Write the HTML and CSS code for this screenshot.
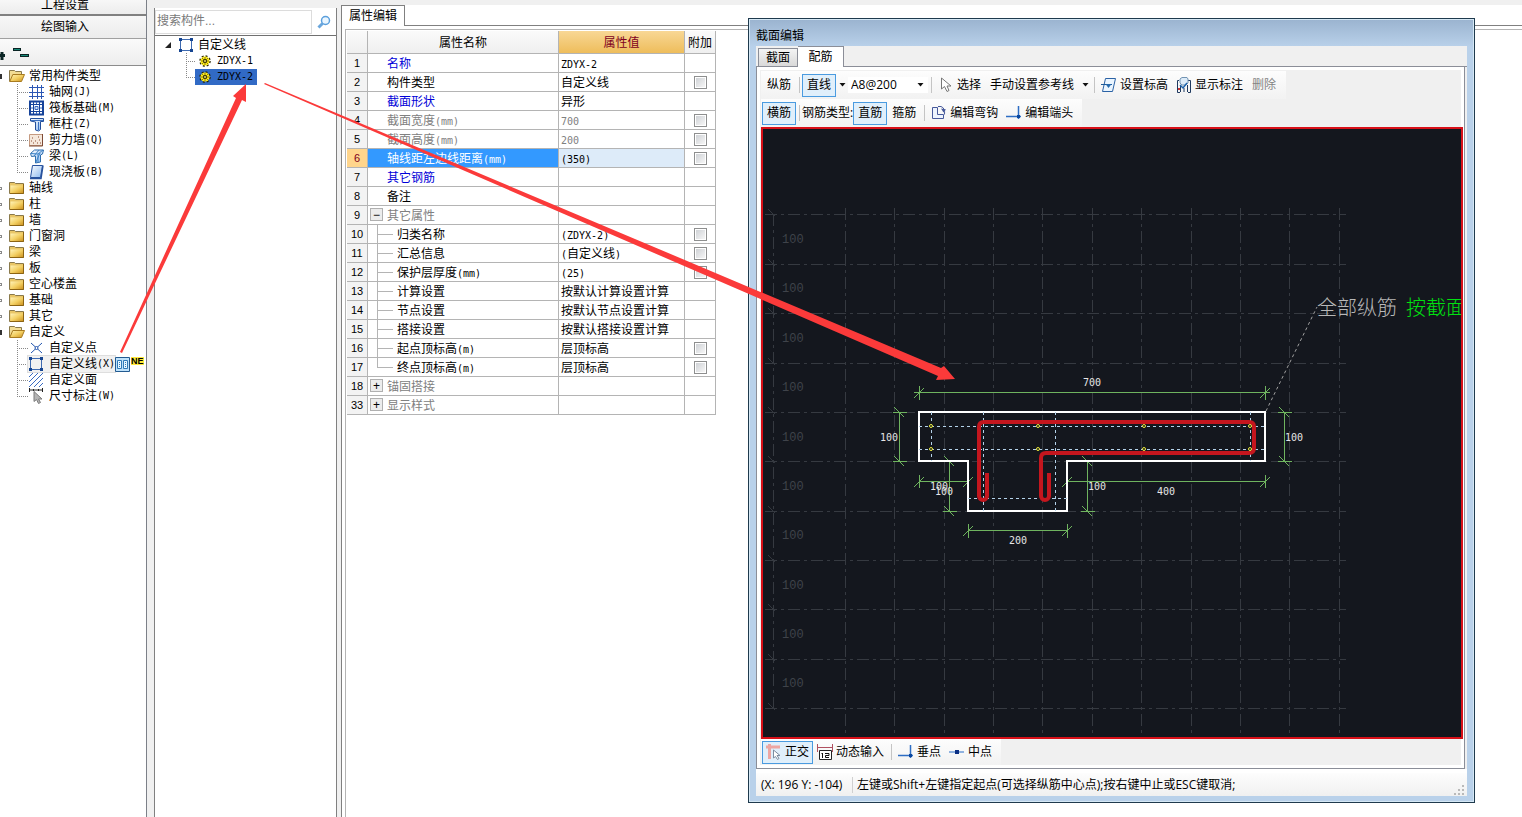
FILE: index.html
```html
<!DOCTYPE html>
<html lang="zh-CN">
<head>
    <meta charset="UTF-8">
    <meta name="viewport" content="width=device-width, initial-scale=1.0">
    <title>属性编辑</title>
    <link rel="stylesheet" href="styles.css">
</head>
<body>

    <!-- Icons -->
    <svg class="sprite" aria-hidden="true">
        <defs>
            <linearGradient id="gold" x1="0" y1="0" x2="1" y2="1">
                <stop offset="0" stop-color="#fff3b8"/>
                <stop offset=".5" stop-color="#f3cf62"/>
                <stop offset="1" stop-color="#c98e1c"/>
            </linearGradient>
            <linearGradient id="sky" x1="0" y1="0" x2="1" y2="1">
                <stop offset="0" stop-color="#ffffff"/>
                <stop offset="1" stop-color="#8ab8ee"/>
            </linearGradient>
        </defs>
        <symbol id="i-folder" viewBox="0 0 16 16">
            <path d="M.5 13.500v-11h5l1 1h8v10z" fill="#e9c667" stroke="#8a7a4c"/>
            <path d="M1.500 5.500h13v8h-13z" fill="url(#gold)"/>
            <path d="M14.500 4v9.500H1" fill="none" stroke="#8c6413"/>
        </symbol>
        <symbol id="i-open" viewBox="0 0 16 16">
            <path d="M.5 13.500v-11h5l1 1h6v3" fill="#f2dc93" stroke="#8a7a4c"/>
            <path d="M.800 13.500l3-7h11.700l-3 7z" fill="url(#gold)" stroke="#a87b20"/>
        </symbol>
        <symbol id="i-grid" viewBox="0 0 16 16">
            <path d="M0 3.500h15M0 8.500h15M0 12.500h15M3.500 1v14M8.500 1v14M12.500 1v14" stroke="#2b57b5" fill="none"/>
        </symbol>
        <symbol id="i-raft" viewBox="0 0 16 16">
            <path d="M1 1.500h13v13H1z" fill="#fff" stroke="#16439a" stroke-width="2"/>
            <path d="M4.500 2v12M10.500 2v12M1 4.500h13M1 11.500h13" stroke="#16439a" fill="none"/>
            <path d="M2 8h2M11 8h2M7.500 2v2M7.500 12v2M6 6.500h3v3H6z" stroke="#3a69bd" fill="#cfe2fa"/>
        </symbol>
        <symbol id="i-column" viewBox="0 0 16 16">
            <path d="M1.500 2.500h13v3h-3v8l-2 1.500-3-1V6l-5-1z" fill="url(#sky)" stroke="#234f9c"/>
            <path d="M2 4.500h12M9.500 6v8" stroke="#3a6fc0" fill="none"/>
        </symbol>
        <symbol id="i-shear" viewBox="0 0 16 16">
            <path d="M.5 2.500h13v11H.5z" fill="#f5e8dc" stroke="#c59a80"/>
            <path d="M13.500 2v12H0" stroke="#7d4a35" fill="none"/>
            <path d="M3 6h1M6 9h1M9 5h1M4 11h1M8 11h1M10 8h1M11 11h1M2 9h1" stroke="#8b4b30"/>
        </symbol>
        <symbol id="i-beam" viewBox="0 0 16 16">
            <path d="M1.500 5.500l4-3.500h9l-1 4-2 1v7l-5 1V8l-4 .5z" fill="url(#sky)" stroke="#2e6dad"/>
            <path d="M2 5.500l7 .5 5-4M7 14l4-9M9 6v8M5 8l5-6" stroke="#3c83c7" fill="none"/>
        </symbol>
        <symbol id="i-slab" viewBox="0 0 16 16">
            <path d="M3.500 1.500h10l-2 12h-10z" fill="url(#sky)" stroke="#27519d"/>
            <path d="M1 14.500h11l2-13" fill="none" stroke="#27519d" stroke-width="1.500"/>
        </symbol>
        <symbol id="i-point" viewBox="0 0 16 16">
            <path d="M2 3l11 10M13 3L2 13" stroke="#2456ae" fill="none"/>
            <circle cx="7.500" cy="8" r="1.500" fill="#fff" stroke="#2456ae"/>
        </symbol>
        <symbol id="i-line" viewBox="0 0 16 16">
            <path d="M1.500 2.500h11v11h-11z" fill="none" stroke="#3e6ab0"/>
            <path d="M0 1h3v3H0zM11 1h3v3h-3zM0 12h3v3H0zM11 12h3v3h-3z" fill="#164591"/>
        </symbol>
        <symbol id="i-area" viewBox="0 0 16 16">
            <path d="M0 5l4-4M0 10l9-9M0 15L14 1M5 15l9-9M10 15l4-4" stroke="#3a6bc2" fill="none"/>
        </symbol>
        <symbol id="i-dim" viewBox="0 0 16 16">
            <path d="M.5 0v4M13.500 0v4M1 2h12M4.500 1v2M9.500 1v2" stroke="#222" fill="none"/>
            <path d="M5 3.500v10l2.500-2 2 4 2-1-2-3.500h3.500z" fill="#b5b5b5" stroke="#7c7c7c"/>
        </symbol>
        <symbol id="i-gear" viewBox="0 0 16 16">
            <circle cx="8" cy="8" r="5" fill="none" stroke="#2b2600" stroke-width="1.500" stroke-dasharray="2 1.920"/>
            <circle cx="8" cy="8" r="4.500" fill="#ffec1a"/>
            <path d="M8 4v8M4 8h8M5 5l6 6M11 5l-6 6" stroke="#5c5400" stroke-width=".7" fill="none"/>
            <circle cx="8" cy="8" r="1.500" fill="#fff36a" stroke="#2b2600"/>
        </symbol>
        <symbol id="i-cursor" viewBox="0 0 16 16">
            <path d="M3.500 1v11l3-2.500 2.500 5 2-1L9 9h4z" fill="#fff" stroke="#777"/>
        </symbol>
        <symbol id="i-level" viewBox="0 0 16 16">
            <path d="M4.500 1.500h10l-3 13h-10z" fill="#eaf5ff" stroke="#2b62a5"/>
            <path d="M0 7.500h11" stroke="#1d5a99"/>
            <path d="M4.500 7h6l-3 4z" fill="#2469ad"/>
        </symbol>
        <symbol id="i-label" viewBox="0 0 16 16">
            <path d="M3 3.500H1.500v12H4M12 3.500h2.500v12H12M4.500 9v6M11.500 8v7M8 11v4" fill="none" stroke="#1f3a60"/>
            <path d="M4 2l2-1.500h5l1 1.500v4l-3 2H6L4 6z" fill="#dcebf8" stroke="#7293b2"/>
            <path d="M4 8l3 3 4-5" fill="none" stroke="#1b62ab" stroke-width="1.500"/>
            <path d="M2 11h2v2H2z" fill="#c33"/>
        </symbol>
        <symbol id="i-hook" viewBox="0 0 16 16">
            <path d="M1.500 2.500h5v7h6v4h-11z" fill="#edf3fd" stroke="#46599b"/>
            <path d="M7 1.500h3c3 1 4 4 3.500 8" fill="none" stroke="#46599b"/>
            <path d="M10 3.500l5 1-2.500 3z" fill="#46599b"/>
        </symbol>
        <symbol id="i-end" viewBox="0 0 16 16">
            <path d="M0 11.500h15M12.500 1v13" fill="none" stroke="#2d6dc4" stroke-width="1.500"/>
            <path d="M11 10h3v3h-3z" fill="#0c479c"/>
        </symbol>
        <symbol id="i-ortho" viewBox="0 0 16 16">
            <path d="M0 3h14M3.500 0v15" stroke="#eda6a2" stroke-width="3"/>
            <path d="M7.500 6v8l2-1.500 2 3 1.500-1-2-3h3z" fill="#fff" stroke="#7d8da0"/>
        </symbol>
        <symbol id="i-input" viewBox="0 0 16 16">
            <path d="M.5 0v8M15.500 0v8M1 3.500h14" stroke="#b05060" fill="none"/>
            <path d="M2.500 6.500h12v9h-12z" fill="#fff" stroke="#222"/>
            <path d="M5.500 9v5M4.500 9.500h1M8 9.500h4v2H8.500v2H12" stroke="#111" fill="none"/>
        </symbol>
        <symbol id="i-mid" viewBox="0 0 16 16">
            <path d="M0 8h15" stroke="#6d9bd8" stroke-width="1.500"/>
            <path d="M6 6h4v4H6z" fill="#0b2f83"/>
        </symbol>
        <symbol id="i-down" viewBox="0 0 7 4">
            <path d="M.5 0h6l-3 3.500z" fill="#111"/>
        </symbol>
    </svg>

    <!-- Module bar -->
    <div class="nav">
        <button class="nav-btn first">工程设置</button>
        <button class="nav-btn">绘图输入</button>
        <div class="nav-tools">
            <svg width="32" height="20" viewBox="0 0 32 20">
                <path d="M-2 12.500h7M2 9v8M13 6.500h8M20 12.500h9" fill="none" stroke="#0a2424" stroke-width="3"/>
                <path d="M14 6.500h6M21 12.500h7" stroke="#178a78"/>
            </svg>
        </div>
        <ul class="tree">
            <li class="root open"><svg class="icon"><use href="#i-open"/></svg>常用构件类型</li>
            <li class="leaf"><svg class="icon"><use href="#i-grid"/></svg>轴网<span class="en">(J)</span></li>
            <li class="leaf"><svg class="icon"><use href="#i-raft"/></svg>筏板基础<span class="en">(M)</span></li>
            <li class="leaf"><svg class="icon"><use href="#i-column"/></svg>框柱<span class="en">(Z)</span></li>
            <li class="leaf"><svg class="icon"><use href="#i-shear"/></svg>剪力墙<span class="en">(Q)</span></li>
            <li class="leaf"><svg class="icon"><use href="#i-beam"/></svg>梁<span class="en">(L)</span></li>
            <li class="leaf last"><svg class="icon"><use href="#i-slab"/></svg>现浇板<span class="en">(B)</span></li>
            <li class="root"><svg class="icon"><use href="#i-folder"/></svg>轴线</li>
            <li class="root"><svg class="icon"><use href="#i-folder"/></svg>柱</li>
            <li class="root"><svg class="icon"><use href="#i-folder"/></svg>墙</li>
            <li class="root"><svg class="icon"><use href="#i-folder"/></svg>门窗洞</li>
            <li class="root"><svg class="icon"><use href="#i-folder"/></svg>梁</li>
            <li class="root"><svg class="icon"><use href="#i-folder"/></svg>板</li>
            <li class="root"><svg class="icon"><use href="#i-folder"/></svg>空心楼盖</li>
            <li class="root"><svg class="icon"><use href="#i-folder"/></svg>基础</li>
            <li class="root"><svg class="icon"><use href="#i-folder"/></svg>其它</li>
            <li class="root open"><svg class="icon"><use href="#i-open"/></svg>自定义</li>
            <li class="leaf"><svg class="icon"><use href="#i-point"/></svg>自定义点</li>
            <li class="leaf">
                <span class="current"><svg class="icon"><use href="#i-line"/></svg>自定义线<span class="en">(X)</span></span>
                <svg class="book" viewBox="0 0 15 15">
                    <path d="M.5.5h14v14H.5z" fill="#bfe2fb" stroke="#235b91"/>
                    <path d="M2.500 3.500h4v8h-4zM8.500 3.500h4v8h-4z" fill="#e6f6ff" stroke="#2f7ab8"/>
                    <path d="M4.500 5v6M10.500 5v6" stroke="#2f7ab8" stroke-dasharray="1 1"/>
                </svg>
                <span class="new">NE</span>
            </li>
            <li class="leaf"><svg class="icon"><use href="#i-area"/></svg>自定义面</li>
            <li class="leaf last"><svg class="icon"><use href="#i-dim"/></svg>尺寸标注<span class="en">(W)</span></li>
        </ul>
    </div>

    <!-- Component list -->
    <div class="parts">
        <div class="search">
            <input type="text" placeholder="搜索构件..." aria-label="搜索构件">
            <button aria-label="搜索">
                <svg width="14" height="14" viewBox="0 0 14 14">
                    <path d="M1.500 12.500l4-4" stroke="#6aa6dc" stroke-width="3"/>
                    <circle cx="8.500" cy="5.500" r="4" fill="#eaf6ff" stroke="#5b9fdc" stroke-width="1.500"/>
                </svg>
            </button>
        </div>
        <ul class="tree parts-tree">
            <li class="top"><svg class="tri" viewBox="0 0 6 6"><path d="M6 0v6H0z" fill="#222"/></svg><svg class="icon"><use href="#i-line"/></svg>自定义线</li>
            <li class="leaf"><span class="part"><svg class="icon"><use href="#i-gear"/></svg><span class="en">ZDYX-1</span></span></li>
            <li class="leaf last"><span class="part selected"><svg class="icon"><use href="#i-gear"/></svg><span class="en">ZDYX-2</span></span></li>
        </ul>
    </div>

    <!-- Property editor -->
    <div class="props">
        <div class="props-tabs"><button class="props-tab">属性编辑</button></div>
        <div class="props-body">
            <table class="grid">
                <colgroup><col class="c-no"><col class="c-name"><col class="c-value"><col class="c-add"></colgroup>
                <thead>
                    <tr><th></th><th>属性名称</th><th class="hot">属性值</th><th>附加</th></tr>
                </thead>
                <tbody>
                    <tr><th>1</th><td class="name blue">名称</td><td><span class="en">ZDYX-2</span></td><td></td></tr>
                    <tr><th>2</th><td class="name">构件类型</td><td>自定义线</td><td class="add"><input type="checkbox" aria-label="构件类型"></td></tr>
                    <tr><th>3</th><td class="name blue">截面形状</td><td>异形</td><td></td></tr>
                    <tr class="dim"><th>4</th><td class="name">截面宽度<span class="en">(mm)</span></td><td><span class="en">700</span></td><td class="add"><input type="checkbox" aria-label="截面宽度"></td></tr>
                    <tr class="dim"><th>5</th><td class="name">截面高度<span class="en">(mm)</span></td><td><span class="en">200</span></td><td class="add"><input type="checkbox" aria-label="截面高度"></td></tr>
                    <tr class="active"><th>6</th><td class="name">轴线距左边线距离<span class="en">(mm)</span></td><td><span class="en">(350)</span></td><td class="add"><input type="checkbox" aria-label="轴线距左边线距离"></td></tr>
                    <tr><th>7</th><td class="name blue">其它钢筋</td><td></td><td></td></tr>
                    <tr><th>8</th><td class="name">备注</td><td></td><td></td></tr>
                    <tr class="dim"><th>9</th><td class="group"><button class="fold" aria-label="折叠">−</button>其它属性</td><td></td><td></td></tr>
                    <tr><th>10</th><td class="sub">归类名称</td><td><span class="en">(ZDYX-2)</span></td><td class="add"><input type="checkbox" aria-label="归类名称"></td></tr>
                    <tr><th>11</th><td class="sub">汇总信息</td><td><span class="en">(</span>自定义线<span class="en">)</span></td><td class="add"><input type="checkbox" aria-label="汇总信息"></td></tr>
                    <tr><th>12</th><td class="sub">保护层厚度<span class="en">(mm)</span></td><td><span class="en">(25)</span></td><td class="add"><input type="checkbox" aria-label="保护层厚度"></td></tr>
                    <tr><th>13</th><td class="sub">计算设置</td><td>按默认计算设置计算</td><td></td></tr>
                    <tr><th>14</th><td class="sub">节点设置</td><td>按默认节点设置计算</td><td></td></tr>
                    <tr><th>15</th><td class="sub">搭接设置</td><td>按默认搭接设置计算</td><td></td></tr>
                    <tr><th>16</th><td class="sub">起点顶标高<span class="en">(m)</span></td><td>层顶标高</td><td class="add"><input type="checkbox" aria-label="起点顶标高"></td></tr>
                    <tr><th>17</th><td class="sub end">终点顶标高<span class="en">(m)</span></td><td>层顶标高</td><td class="add"><input type="checkbox" aria-label="终点顶标高"></td></tr>
                    <tr class="dim"><th>18</th><td class="group"><button class="fold" aria-label="展开">+</button>锚固搭接</td><td></td><td></td></tr>
                    <tr class="dim"><th>33</th><td class="group"><button class="fold" aria-label="展开">+</button>显示样式</td><td></td><td></td></tr>
                </tbody>
            </table>
        </div>
    </div>

    <!-- Section editor window -->
    <div class="window">
        <div class="title">截面编辑</div>
        <div class="client">
            <div class="tabs">
                <button class="tab">截面</button>
                <button class="tab on">配筋</button>
            </div>
            <div class="pane">
                <div class="bar">
                    <button class="tool">纵筋</button>
                    <i class="sep"></i>
                    <button class="tool on">直线</button>
                    <button class="drop" aria-label="直线选项"><svg><use href="#i-down"/></svg></button>
                    <div class="combo">
                        <select aria-label="钢筋信息"><option>A8@200</option></select>
                        <svg class="down"><use href="#i-down"/></svg>
                    </div>
                    <i class="sep"></i>
                    <button class="tool pic"><svg class="icon"><use href="#i-cursor"/></svg>选择</button>
                    <button class="tool">手动设置参考线</button>
                    <button class="drop" aria-label="参考线选项"><svg><use href="#i-down"/></svg></button>
                    <i class="sep"></i>
                    <button class="tool pic"><svg class="icon"><use href="#i-level"/></svg>设置标高</button>
                    <button class="tool pic"><svg class="icon"><use href="#i-label"/></svg>显示标注</button>
                    <button class="tool" disabled>删除</button>
                </div>
                <div class="bar">
                    <button class="tool on">横筋</button>
                    <i class="sep"></i>
                    <span class="caption">钢筋类型:</span>
                    <button class="tool on">直筋</button>
                    <button class="tool">箍筋</button>
                    <i class="sep"></i>
                    <button class="tool pic"><svg class="icon"><use href="#i-hook"/></svg>编辑弯钩</button>
                    <button class="tool pic"><svg class="icon"><use href="#i-end"/></svg>编辑端头</button>
                </div>

                <svg class="canvas" viewBox="763 129 698 608">
                    <!-- axis grid -->
                    <g class="axis">
                        <path d="M845.500 208V737M894.500 208V737M944.500 208V737M993.500 208V737M1042.500 208V737M1092.500 208V737M1141.500 208V737M1191.500 208V737M1240.500 208V737M1289.500 208V737M1339.500 208V737"/>
                        <path d="M765 214.500H1346M765 264.500H1346M765 313.500H1346M765 363.500H1346M765 412.500H1346M765 461.500H1346M765 511.500H1346M765 560.500H1346M765 609.500H1346M765 659.500H1346M765 708.500H1346"/>
                        <path d="M773.500 214V708"/>
                    </g>
                    <path class="axis-tick" d="M768 209l7 7M768 259l7 7M768 308l7 7M768 358l7 7M768 407l7 7M768 456l7 7M768 506l7 7M768 555l7 7M768 604l7 7M768 654l7 7M768 703l7 7"/>
                    <g class="axis-text">
                        <text x="782" y="243">100</text>
                        <text x="782" y="292">100</text>
                        <text x="782" y="342">100</text>
                        <text x="782" y="391">100</text>
                        <text x="782" y="441">100</text>
                        <text x="782" y="490">100</text>
                        <text x="782" y="539">100</text>
                        <text x="782" y="589">100</text>
                        <text x="782" y="638">100</text>
                        <text x="782" y="687">100</text>
                    </g>

                    <!-- dimensions -->
                    <g class="dims">
                        <path d="M914 392.500H1270M919.500 386v14M914 398l10-10M1265.500 386v14M1260 398l10-10"/>
                        <path d="M899.500 412V462M893 412.500h14M894 407l10 10M893 461.500h14M894 456l10 10"/>
                        <path d="M1284.500 412V462M1278 412.500h14M1279 407l10 10M1278 461.500h14M1279 456l10 10"/>
                        <path d="M949.500 461V511M943 461.500h14M944 456l10 10M943 511.500h14M944 506l10 10"/>
                        <path d="M1087.500 461V511M1081 461.500h14M1082 456l10 10M1081 511.500h14M1082 506l10 10"/>
                        <path d="M919 481.500H968M919.500 475v13M914 487l10-10M968.500 475v13M963 487l10-10"/>
                        <path d="M1067 481.500H1265M1067.500 475v13M1062 487l10-10M1265.500 475v13M1260 487l10-10"/>
                        <path d="M968 530.500H1067M968.500 524v14M963 536l10-10M1067.500 524v14M1062 536l10-10"/>
                    </g>

                    <!-- section outline -->
                    <path class="outline" d="M919 412H1265V461H1067V511H968V461H919z"/>

                    <!-- stirrup -->
                    <path class="cover" d="M919 426.500H1265M919 449.500H1265M968 498.500H1067M931.500 412V461M983.500 412V511M1055.500 412V511M1250.500 412V461"/>
                    <path class="rebar" d="M987 475V496a4 4 0 0 1-8 0V427q0-5 5-5H1249q5 0 5 5V448q0 5-5 5H1046q-5 0-5 5V496a4 4 0 0 0 8 0V475"/>
                    <g class="bars">
                        <circle cx="931" cy="426" r="1.500"/><circle cx="1038" cy="426" r="1.500"/><circle cx="1144" cy="426" r="1.500"/><circle cx="1250" cy="426" r="1.500"/>
                        <circle cx="931" cy="449" r="1.500"/><circle cx="1038" cy="449" r="1.500"/><circle cx="1144" cy="449" r="1.500"/><circle cx="1250" cy="449" r="1.500"/>
                    </g>
                    <g class="dim-text">
                        <text x="1092" y="386">700</text>
                        <text x="889" y="441">100</text>
                        <text x="1294" y="441">100</text>
                        <text x="939" y="490">100</text>
                        <text x="944" y="495">100</text>
                        <text x="1097" y="490">100</text>
                        <text x="1166" y="495">400</text>
                        <text x="1018" y="544">200</text>
                    </g>

                    <!-- note -->
                    <path class="leader" d="M1266 411L1317 307"/>
                    <text class="note" x="1317" y="315">全部纵筋</text>
                    <text class="note green" x="1406" y="315">按截面</text>
                </svg>

                <div class="bar foot">
                    <button class="tool pic on"><svg class="icon"><use href="#i-ortho"/></svg>正交</button>
                    <button class="tool pic"><svg class="icon"><use href="#i-input"/></svg>动态输入</button>
                    <i class="sep"></i>
                    <button class="tool pic"><svg class="icon"><use href="#i-end"/></svg>垂点</button>
                    <button class="tool pic"><svg class="icon"><use href="#i-mid"/></svg>中点</button>
                </div>
            </div>
            <div class="status">
                <span class="coords">(X: 196 Y: -104)</span>
                <span class="hint">左键或Shift+左键指定起点(可选择纵筋中心点);按右键中止或ESC键取消;</span>
                <svg class="grip" width="11" height="11" viewBox="0 0 11 11">
                    <path d="M8 0h2v2H8zM8 4h2v2H8zM8 8h2v2H8zM4 4h2v2H4zM4 8h2v2H4zM0 8h2v2H0z" fill="#b9b9b9"/>
                </svg>
            </div>
        </div>
    </div>

    <!-- Guide arrows -->
    <svg class="arrows" width="1000" height="400" viewBox="0 0 1000 400">
        <path d="M120 352L236 98l-3-2L246 84v18l-4-2L122 353z"/>
        <path d="M265 83L941 368l3-2L955 379l-19 1 2-4L264 84z"/>
    </svg>

</body>
</html>
```
FILE: styles.css
```css
* {
    box-sizing: border-box;
}

body {
    margin: 0;
    display: flex;
    min-height: 100vh;
    position: relative;
    overflow: hidden;
    background: #f0f0f0;
    font-family: "Liberation Sans", "Noto Sans CJK SC", sans-serif;
    font-size: 12px;
    line-height: 16px;
    color: #000;
}

button,
input,
select {
    font: inherit;
    color: inherit;
    margin: 0;
    padding: 0;
}

ul {
    list-style: none;
    margin: 0;
    padding: 0;
}

.sprite {
    position: absolute;
    width: 0;
    height: 0;
}

.icon {
    width: 16px;
    height: 16px;
    flex: none;
}

.en {
    font-family: "DejaVu Sans Mono", monospace;
    font-size: 10px;
}

/* Module bar */
.nav {
    width: 147px;
    flex: none;
    display: flex;
    flex-direction: column;
    border-right: 1px solid #7c8088;
}

.nav-btn {
    height: 23px;
    border: none;
    border-bottom: 1px solid #a0a0a0;
    background: linear-gradient(#f7f7f7, #ececec);
    padding-right: 16px;
}

.nav-btn.first {
    height: 16px;
    line-height: 10px;
    padding-bottom: 4px;
    border-bottom: 2px solid #808080;
}

.nav-tools {
    height: 27px;
    padding-top: 4px;
    border-bottom: 1px solid #8c8c8c;
    background: linear-gradient(#fafafa, #ededed);
}

.tree {
    flex: 1;
    background: #fff;
    white-space: nowrap;
}

.nav .tree {
    padding-top: 2px;
}

.tree li {
    display: flex;
    align-items: center;
    height: 16px;
}

.root .icon {
    margin-right: 4px;
}

.root::before {
    content: "";
    width: 9px;
    height: 5px;
    background: radial-gradient(circle at 0 50%, #fff 1px, #888 1px 2px, transparent 2px);
}

.root.open::before {
    background: linear-gradient(#333, #333) 0 0 / 2px 5px no-repeat;
}

.leaf::before {
    content: "";
    width: 11px;
    height: 16px;
    margin-left: 17px;
    background:
        repeating-linear-gradient(to bottom, #888 0 1px, transparent 1px 2px) 0 0 / 1px 16px no-repeat,
        repeating-linear-gradient(to right, #888 0 1px, transparent 1px 2px) 0 8px / 11px 1px no-repeat;
}

.leaf.last::before {
    background-size: 1px 8px, 11px 1px;
}

.leaf .icon {
    margin-left: 1px;
    margin-right: 4px;
}

.current {
    display: flex;
    align-items: center;
    height: 16px;
    background: #f1f1f1;
    box-shadow: 0 0 0 1px #dedede;
}

.book {
    width: 15px;
    height: 15px;
}

.new {
    margin-left: 1px;
    margin-bottom: 6px;
    background: #ffe93b;
    font-size: 9px;
    font-weight: bold;
    line-height: 8px;
}

/* Component list */
.parts {
    width: 183px;
    flex: none;
    display: flex;
    flex-direction: column;
    margin: 8px 4px 0 7px;
    border-left: 1px solid #808080;
    border-right: 1px solid #808080;
    background: #fff;
}

.search {
    display: flex;
    height: 27px;
    padding: 2px 0 1px;
}

.search input {
    width: 157px;
    border: 1px solid #dcdcdc;
    padding: 0 1px 2px;
    outline: none;
}

.search input::placeholder {
    color: #7a7a7a;
}

.search button {
    flex: 1;
    border: none;
    background: none;
    padding-top: 3px;
}

.parts-tree {
    border-top: 1px solid #707070;
    padding-top: 1px;
}

.parts-tree .top {
    padding-left: 10px;
}

.tri {
    width: 6px;
    height: 6px;
    margin-right: 8px;
}

.top .icon {
    margin-right: 3px;
}

.parts-tree .leaf::before {
    margin-left: 31px;
    width: 9px;
}

.part {
    display: flex;
    height: 16px;
    padding-left: 1px;
    padding-right: 4px;
}

.part.selected {
    background: #316ac5;
}

/* Property editor */
.props {
    flex: 1;
    margin-top: 5px;
    display: flex;
    flex-direction: column;
    border-left: 1px solid #808080;
    background: #fff;
}

.props-tabs {
    height: 21px;
    display: flex;
}

.props-tabs::after {
    content: "";
    flex: 1;
    border-bottom: 1px solid #808080;
}

.props-tab {
    width: 63px;
    border: 1px solid #808080;
    border-width: 1px 1px 0 0;
    background: #fff;
}

.props-body {
    flex: 1;
    margin: 3px 0 0 3px;
    padding: 1px 0 0 1px;
    border: 1px solid #b4b4b4;
    border-width: 1px 0 0 1px;
}

.grid {
    width: 369px;
    table-layout: fixed;
    border-collapse: separate;
    border-spacing: 0;
}

.c-no { width: 21px; }
.c-name { width: 191px; }
.c-value { width: 126px; }
.c-add { width: 31px; }

.grid th,
.grid td {
    height: 19px;
    padding: 1px 0 0 2px;
    border-right: 1px solid #b4b4b4;
    border-bottom: 1px solid #b4b4b4;
    line-height: 14px;
    text-align: left;
    white-space: nowrap;
}

.grid .en {
    line-height: 10px;
}

.grid th {
    padding: 0;
    background: #f3f3f3;
    font-weight: normal;
    text-align: center;
}

.grid tbody th {
    font-size: 11px;
}

.grid thead th {
    height: 23px;
    padding-top: 2px;
    background: linear-gradient(#fafafa, #efefef);
}

.grid thead .hot {
    background: linear-gradient(#f8d795, #eebd5b);
    color: #800020;
}

.grid .name {
    padding-left: 19px;
}

.grid .blue {
    color: #0000d8;
}

.dim td {
    color: #808080;
}

.grid .active th {
    background: #ffd58c;
    color: #800020;
}

.active td {
    background: #ddebf9;
}

.grid .active .name {
    background: #3399ff;
    color: #fff;
}

.grid .active .add {
    background: #fff;
}

.grid .add {
    padding: 0;
    text-align: center;
}

.add input {
    appearance: none;
    display: block;
    width: 13px;
    height: 13px;
    margin: 0 auto;
    border: 1px solid #8e8f8f;
    background: linear-gradient(135deg, #cfd2d6, #f6f6f6) content-box;
    padding: 1px;
}

.fold {
    width: 13px;
    height: 13px;
    margin-right: 4px;
    border: 1px solid #b0b0b0;
    background: #ececec;
    color: #000;
    line-height: 10px;
    vertical-align: 1px;
}

.grid .sub {
    padding-left: 29px;
    background:
        linear-gradient(#b4b4b4, #b4b4b4) 9px 0 / 1px 19px no-repeat,
        linear-gradient(#b4b4b4, #b4b4b4) 9px 9px / 16px 1px no-repeat;
}

.grid .sub.end {
    background-size: 1px 9px, 16px 1px;
}

/* Section editor window */
.window {
    position: absolute;
    left: 748px;
    top: 18px;
    width: 727px;
    padding: 1px 7px 6px;
    border: 1px solid #1f3a4d;
    background: linear-gradient(#9ab3cf, #b9d1ea 28px);
    box-shadow: inset 0 0 0 1px #d5e8f5;
}

.title {
    height: 26px;
    padding-top: 8px;
}

.client {
    background: #f0f0f0;
    font-family: "Open Sans", "Noto Sans CJK SC", sans-serif;
}

.tabs {
    display: flex;
    align-items: flex-end;
    height: 21px;
    padding-left: 2px;
    border-bottom: 1px solid #8b8e98;
}

.tab {
    width: 40px;
    height: 18px;
    border: 1px solid #8b8e98;
    border-bottom: none;
    background: linear-gradient(#f4f4f4, #d9d9d9);
}

.tab.on {
    width: 46px;
    height: 21px;
    margin-bottom: -1px;
    border-left: none;
    background: #fff;
}

.pane {
    margin-right: 2px;
    padding: 4px 1px 3px 4px;
    border: 1px solid #8b8e98;
    border-top: none;
    box-shadow: inset 0 0 0 3px #fff;
}

.bar {
    display: flex;
    align-items: center;
    width: fit-content;
    height: 28px;
    padding: 0 5px 0 1px;
    background: linear-gradient(#fdfdfd, #f2f2f2);
    white-space: nowrap;
}

.bar.foot {
    height: 26px;
}

.tool {
    display: flex;
    align-items: center;
    height: 23px;
    padding: 0 4px;
    border: 1px solid transparent;
    background: none;
}

.tool.pic {
    padding: 0 3px;
}

.tool.on {
    border-color: #4a9be0;
    background: #e0effb;
}

.tool:disabled {
    color: #838383;
}

.tool .icon {
    margin-right: 3px;
}

.sep {
    width: 1px;
    height: 16px;
    margin: 0 2px 0 3px;
    background: #c4c4c4;
}

.drop {
    display: flex;
    width: 12px;
    justify-content: center;
    border: none;
    background: none;
}

.drop svg,
.down {
    width: 7px;
    height: 4px;
}

.combo {
    display: flex;
    align-items: center;
    width: 80px;
    padding-right: 4px;
    background: #fff;
}

.combo select {
    flex: 1;
    appearance: none;
    border: none;
    background: none;
    padding-left: 3px;
}

.canvas {
    display: block;
    width: 100%;
    border: 2px solid #d81018;
    background: #14171e;
}

.axis path {
    fill: none;
    stroke: #363a41;
    stroke-dasharray: 12 4 3 4;
}

.axis-tick {
    stroke: #34383f;
}

.axis-text {
    fill: #3f434a;
    font-family: "Liberation Mono", monospace;
    font-size: 12px;
}

.dims path {
    fill: none;
    stroke: #6fb45f;
}

.dim-text {
    fill: #e6e6e6;
    font-family: "DejaVu Sans Mono", monospace;
    font-size: 10px;
    text-anchor: middle;
}

.outline {
    fill: none;
    stroke: #fff;
    stroke-width: 2;
}

.rebar {
    fill: none;
    stroke: #c4161e;
    stroke-width: 4;
    stroke-linecap: square;
}

.cover {
    fill: none;
    stroke: #b4d2ea;
    stroke-dasharray: 3 3;
}

.bars {
    fill: #14171e;
    stroke: #e8e83c;
}

.leader {
    stroke: #a0a0a0;
    stroke-dasharray: 3 3;
}

.note {
    fill: #b8b8b8;
    font-family: "Noto Sans CJK SC", sans-serif;
    font-size: 20px;
    font-weight: 300;
}

.note.green {
    fill: #00e010;
}

.status {
    display: flex;
    align-items: center;
    height: 27px;
    padding: 0 2px 0 5px;
    border-top: 4px solid #fff;
    background: linear-gradient(#fdfdfd, #f0f0f0);
}

.coords {
    width: 92px;
    border-right: 1px solid #d0d0d0;
}

.hint {
    flex: 1;
    padding-left: 4px;
}

.grip {
    align-self: flex-end;
}

/* Guide arrows */
.arrows {
    position: absolute;
    left: 0;
    top: 0;
    fill: #fb3a3a;
    pointer-events: none;
}
```
